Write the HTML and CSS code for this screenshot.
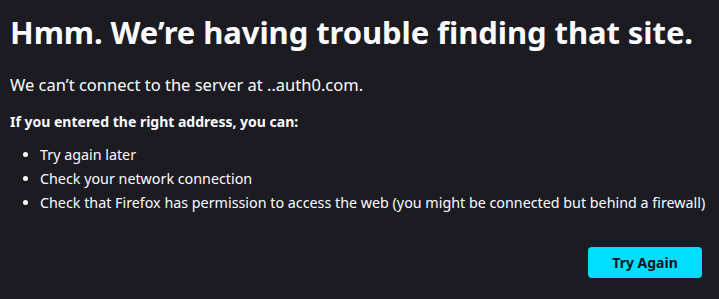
FILE: index.html
```html
<!DOCTYPE html>
<html lang="en">
<head>
<meta charset="utf-8">
<title>Server Not Found</title>
<link rel="stylesheet" href="styles.css">
</head>
<body>
<main class="page">
  <h1 class="title">Hmm. We’re having trouble finding that site.</h1>
  <p class="desc">We can’t connect to the server at ..auth0.com.</p>
  <p class="lead">If you entered the right address, you can:</p>
  <ul class="tips">
    <li>Try again later</li>
    <li>Check your network connection</li>
    <li>Check that Firefox has permission to access the web (you might be connected but behind a firewall)</li>
  </ul>
  <div class="actions">
    <button class="retry" type="button">Try Again</button>
  </div>
</main>
</body>
</html>
```

FILE: styles.css
```css
html, body {
  margin: 0;
  padding: 0;
  background: #1c1b22;
  color: #fbfbfe;
  font-family: "Noto Sans", "DejaVu Sans", sans-serif;
}

.page {
  padding: 10px 13px 0 10px;
}

.title {
  margin: 0;
  font-size: 31px;
  font-weight: 700;
  line-height: 44px;
  letter-spacing: -0.08px;
  white-space: nowrap;
}

.desc {
  margin: 19px 0 0;
  font-size: 16.5px;
  line-height: 24px;
  color: #fbfbfe;
}

.lead {
  margin: 14px 0 0;
  font-size: 14px;
  font-weight: 700;
  line-height: 22px;
}

.tips {
  margin: 10px 0 0;
  padding-left: 30px;
  font-size: 14.3px;
  line-height: 24px;
}

.tips li {
  white-space: nowrap;
}

.actions {
  display: flex;
  justify-content: flex-end;
  margin-top: 32px;
  padding-right: 4px;
}

.retry {
  width: 114px;
  height: 31px;
  border: none;
  border-radius: 4px;
  background: #00ddff;
  color: #15141a;
  font-family: inherit;
  font-size: 14px;
  font-weight: 700;
  padding: 0;
}
```
